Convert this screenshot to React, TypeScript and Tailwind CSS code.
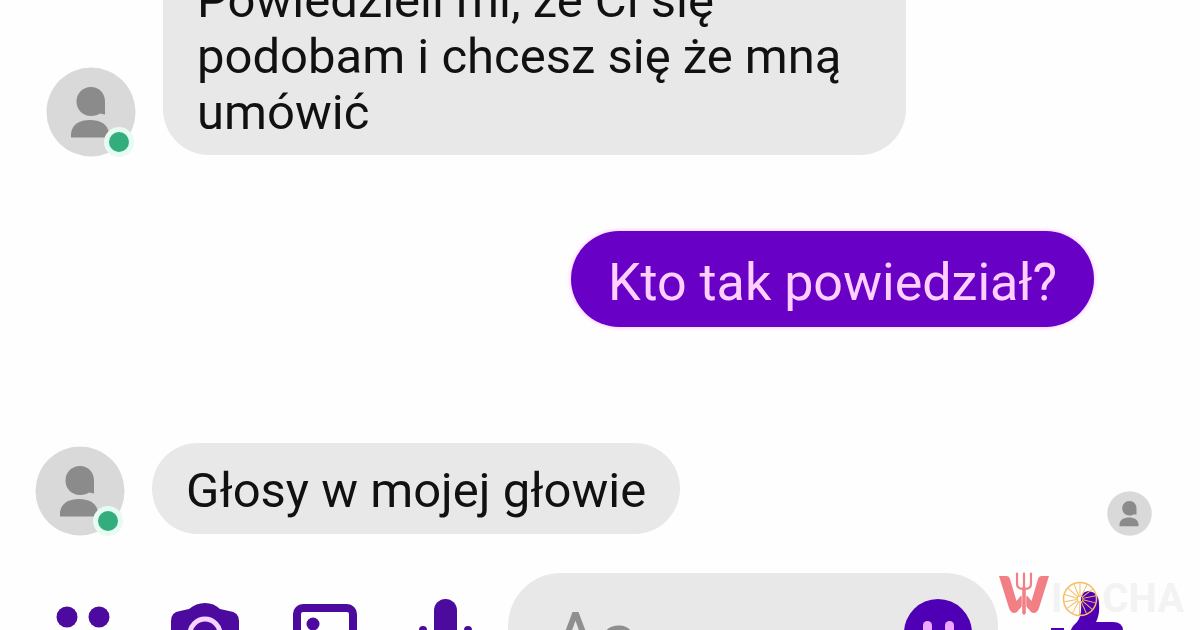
import type { ReactNode } from "react";

function Person({ className }: { className: string }) {
  return (
    <svg viewBox="0 0 90 90" className={className} aria-hidden="true">
      <circle cx="45" cy="45" r="44.500" fill="#d9d9d9" />
      <path
        d="M45 20C36.500 20 30.500 26.500 30.500 34.500S36.500 49 45 49c4 0 7-1 9-2.500l5 1V34.500C59 26.500 53.500 20 45 20Z"
        fill="#8b8b8b"
      />
      <path d="M25 70.500v-4C26 57 34 53 44 53s18 4 19 13.500v4Z" fill="#8b8b8b" />
    </svg>
  );
}

function Avatar() {
  return (
    <div className="relative shrink-0">
      <Person className="block size-[90px]" />
      <span className="absolute right-0.5 bottom-0 size-[30px] rounded-full border-[5px] border-[#e6fbf1] bg-[#33ad7c]" />
    </div>
  );
}

function Received({ children, className }: { children: ReactNode; className: string }) {
  return (
    <div className="flex items-end gap-[27px]">
      <Avatar />
      <p className={`mb-0.5 rounded-[46px] bg-[#e8e8e8] px-[34px] text-[#111] ${className}`}>{children}</p>
    </div>
  );
}

function ToolButton({ label, children }: { label: string; children: ReactNode }) {
  return (
    <button type="button" aria-label={label} className="shrink-0">
      <svg viewBox="0 0 72 72" className="block size-[72px]" fill="#4c0b9e" aria-hidden="true">
        {children}
      </svg>
    </button>
  );
}

const SPOKES = [0, 26, 52, 78, 104, 130, 156, 182, 208, 234, 260, 286, 312, 338];

function Watermark() {
  return (
    <div className="absolute right-4 bottom-1 flex items-center text-[40px] leading-[48px] font-bold text-[#f3f3f3]">
      <svg viewBox="0 0 50 44" className="mb-2.5 block h-11 w-[50px]" fill="#f27f84" aria-hidden="true">
        <path d="M0 4h7.500q2.500 0 3.500 3l6.500 22 4.500-5.500q1.500 1.500 1 4V34l-5 6q-3 2-5.500 0-1.500-1-2.500-4Z" />
        <path d="M50 4h-7.500q-2.500 0-3.500 3l-6.500 22-4.500-5.500q-1.500 1.500-1 4V34l5 6q3 2 5.500 0 1.500-1 2.500-4Z" />
        <path
          d="M18 1.500V12q0 5 7 5t7-5V1.500M25 1.500V41"
          fill="none"
          stroke="#fefefe"
          strokeWidth="4.500"
          strokeLinecap="round"
        />
        <path
          d="M18 1.500V12q0 5 7 5t7-5V1.500M25 1.500V16"
          fill="none"
          stroke="#f27f84"
          strokeWidth="2.200"
          strokeLinecap="round"
        />
        <path d="M25 16V41" fill="none" stroke="#f27f84" strokeWidth="3.500" strokeLinecap="round" />
      </svg>
      <span className="ml-0.5">I</span>
      <svg viewBox="0 0 36 36" className="block size-9" fill="none" stroke="#f7bd60" aria-hidden="true">
        <circle cx="18" cy="18" r="16.500" strokeWidth="1.500" />
        <circle cx="18" cy="18" r="3" />
        {SPOKES.map((a) => (
          <path key={a} d="M18 15V2" transform={`rotate(${a} 18 18)`} />
        ))}
      </svg>
      <span className="ml-1">CHA</span>
    </div>
  );
}

export default function App() {
  return (
    <div className="relative h-screen overflow-hidden bg-[#fefefe] font-[Roboto,sans-serif] text-[49px] leading-[56px]">
      <main className="-mt-[43px] flex flex-col">
        <div className="pl-[46px]">
          <Received className="max-w-[743px] pt-4 pb-3.5">
            Powiedzieli mi, że Ci się podobam i chcesz się że mną umówić
          </Received>
        </div>
        <div className="mt-[74px] flex justify-end pr-[106px]">
          <p className="rounded-full bg-[#6800c6] px-[37px] pt-6 pb-4 text-[52px] text-[#ffd0ff] shadow-[0_0_5px_#f6b8ff]">
            Kto tak powiedział?
          </p>
        </div>
        <div className="mt-[116px] flex items-end justify-between pr-12 pl-[35px]">
          <Received className="pt-5 pb-[15px]">Głosy w mojej głowie</Received>
          <Person className="block size-[45px]" />
        </div>
      </main>
      <footer className="mt-[37px] flex items-start pr-[70px] pl-12">
        <div className="mt-6 flex gap-12">
          <ToolButton label="More">
            <circle cx="19" cy="20" r="10.500" />
            <circle cx="51" cy="20" r="10.500" />
            <circle cx="19" cy="52" r="10.500" />
            <circle cx="51" cy="52" r="10.500" />
          </ToolButton>
          <ToolButton label="Camera">
            <path d="M3 24q0-9 9-10l9-2q7-6 16-6t15 6l9 2q10 1 10 10v30q0 8-8 8H11q-8 0-8-8Z" />
            <circle cx="37" cy="37" r="15" fill="none" stroke="#f5d5ff" strokeWidth="5" />
          </ToolButton>
          <ToolButton label="Gallery">
            <rect x="9" y="11" width="56" height="54" rx="6" fill="none" stroke="#4c0b9e" strokeWidth="8" />
            <circle cx="25" cy="27" r="6.500" />
          </ToolButton>
          <ToolButton label="Voice">
            <rect x="26" y="2" width="23" height="46" rx="11.500" />
            <path d="M15 33v2q0 22 22.500 22T60 35v-2" fill="none" stroke="#4c0b9e" strokeWidth="8" strokeLinecap="round" />
          </ToolButton>
        </div>
        <div className="ml-7 flex min-w-0 flex-1 items-start rounded-[64px] bg-[#e8e8e8] pt-[26px] pr-[26px] pl-11">
          <input
            aria-label="Message"
            placeholder="Aa"
            className="h-20 min-w-0 flex-1 bg-transparent text-[72px] placeholder:text-[#8f8f8f]"
          />
          <button type="button" aria-label="Emoji" className="shrink-0">
            <svg viewBox="0 0 68 68" className="block size-[68px]" aria-hidden="true">
              <circle cx="34" cy="34" r="34" fill="#4f00b4" />
              <rect x="19" y="22" width="9" height="13" rx="4.500" fill="#efa8ff" />
              <rect x="41" y="22" width="9" height="13" rx="4.500" fill="#efa8ff" />
              <path d="M18 43q16 16 32 0" fill="none" stroke="#efa8ff" strokeWidth="5" strokeLinecap="round" />
            </svg>
          </button>
        </div>
        <button type="button" aria-label="Like" className="mt-4 ml-12 shrink-0">
          <svg viewBox="0 0 84 84" className="block size-[84px]" fill="#4f00b4" aria-hidden="true">
            <path d="M5 39h13v38H5Z" />
            <path d="M24 76V43q2-6 7-10 5-6 4-19-1-11 7-12 11 1 11 13 1 10-3 18h17q10 0 10 9 0 5-3 7 2 8-4 11 1 7-5 9 0 8-9 8Z" />
          </svg>
        </button>
      </footer>
      <Watermark />
    </div>
  );
}
